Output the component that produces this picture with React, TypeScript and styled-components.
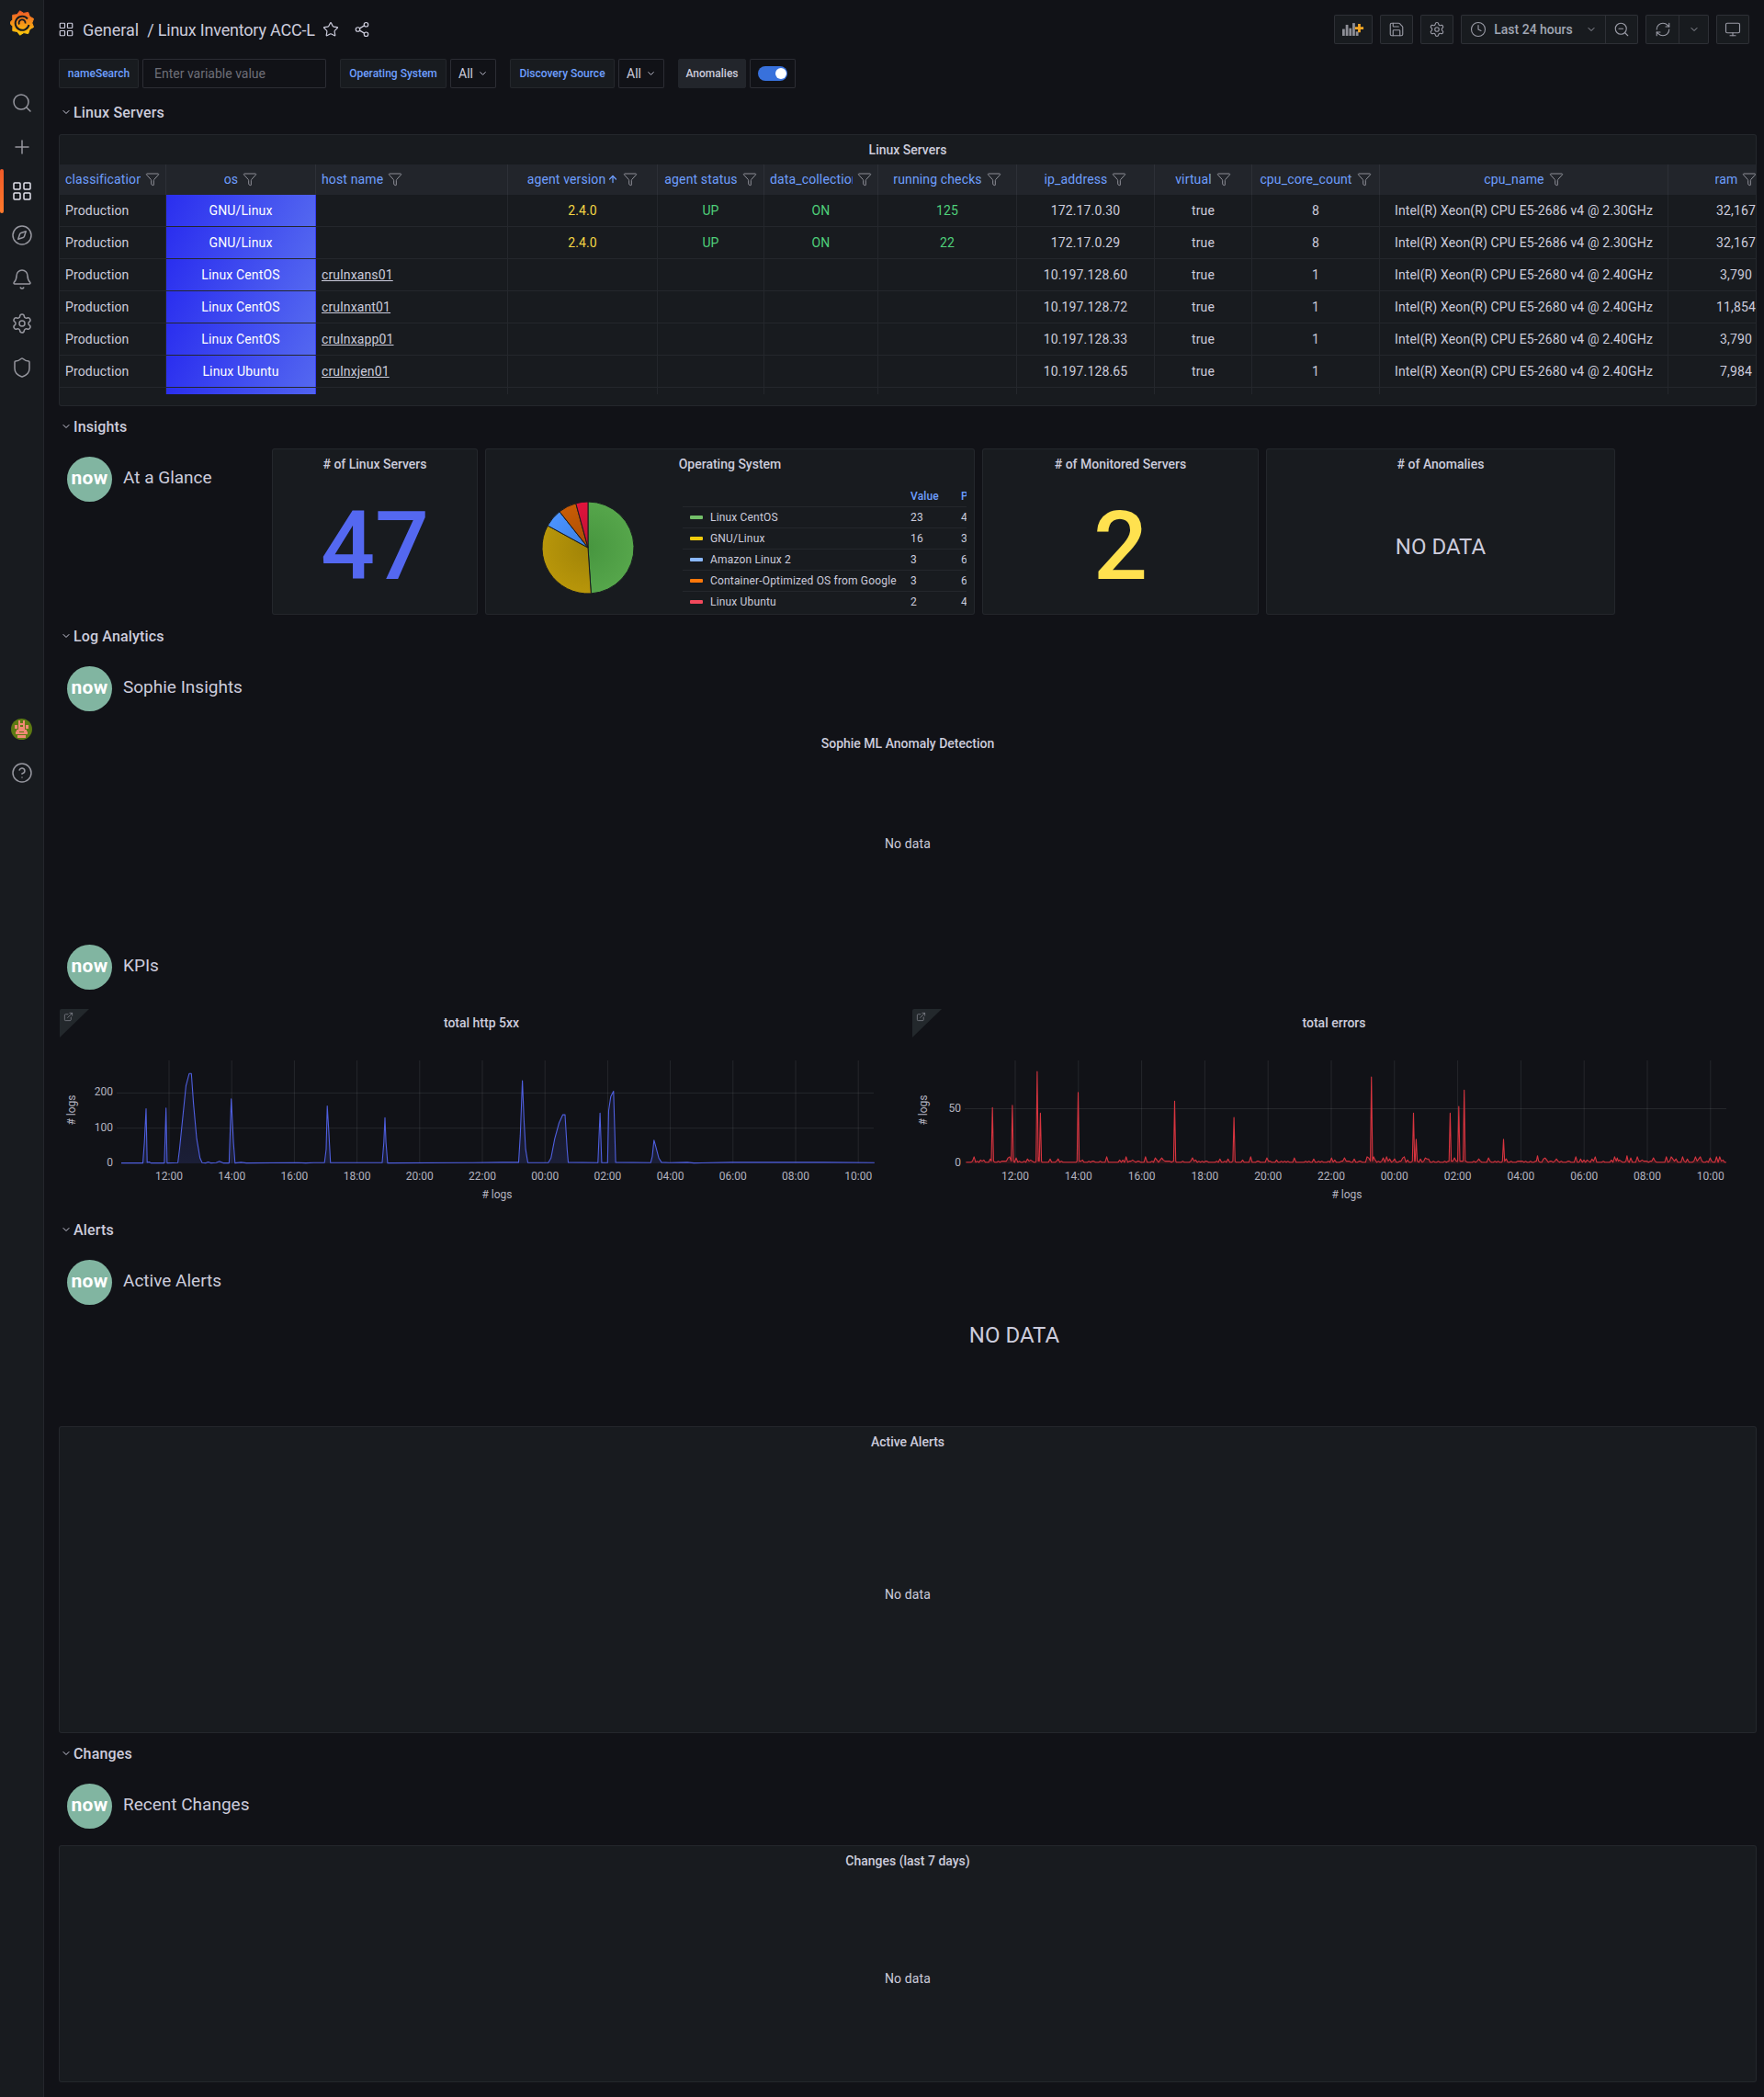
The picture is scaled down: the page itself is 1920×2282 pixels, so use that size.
import styled, { createGlobalStyle } from "styled-components";
import {
  ArrowUp,
  Bell,
  ChevronDown,
  CircleHelp,
  Clock,
  Compass,
  ExternalLink,
  Filter,
  LayoutGrid,
  Monitor,
  Plus,
  RefreshCw,
  Save,
  Search,
  Settings,
  Share2,
  Shield,
  Star,
  ZoomOut,
} from "lucide-react";

const GlobalStyle = createGlobalStyle`
  html, body {
    margin: 0;
    background: #111217;
    color: #ccccdc;
    font-family: Roboto, "Liberation Sans", sans-serif;
    font-size: 14px;
  }
  * { box-sizing: border-box; }
`;

const BORDER = "rgba(204, 204, 220, 0.07)";
const BTN_BORDER = "rgba(204, 204, 220, 0.12)";

const Page = styled.div`
  display: flex;
  width: 1920px;
  height: 2282px;
  overflow: hidden;
`;

/* sidebar */
const Sidebar = styled.nav`
  flex: 0 0 48px;
  background: #181b1f;
  border-right: 1px solid #24262c;
  display: flex;
  flex-direction: column;
`;
const BrandBox = styled.div`
  height: 88px;
  padding-top: 11px;
  display: flex;
  justify-content: center;
  align-items: flex-start;
`;
const NavItem = styled.div<{ $active?: boolean }>`
  position: relative;
  height: 48px;
  display: flex;
  align-items: center;
  justify-content: center;
  color: ${(p) => (p.$active ? "#e4e4ee" : "#96979f")};
  ${(p) =>
    p.$active &&
    `&::before {
      content: "";
      position: absolute;
      left: 0;
      top: 0;
      bottom: 0;
      width: 4px;
      border-radius: 2px;
      background: linear-gradient(180deg, #f05a28, #ff7a2b);
    }`}
`;
const NavSpacer = styled.div`
  height: 345px;
`;
const AvatarClip = styled.div`
  width: 23px;
  height: 23px;
  border-radius: 50%;
  overflow: hidden;
`;

/* main */
const Main = styled.main`
  flex: 1;
  min-width: 0;
  padding: 0 8px 0 16px;
`;
const TopBar = styled.header`
  height: 64px;
  display: flex;
  align-items: center;
  padding-right: 8px;
`;
const Crumbs = styled.div`
  display: flex;
  align-items: center;
  font-size: 18px;
  color: #ccccdc;
`;
const CrumbIcon = styled.span`
  display: flex;
  width: 26px;
  margin-left: -1px;
  margin-right: 1px;
  color: #ccccdc;
`;
const CrumbSep = styled.span`
  margin-left: 9px;
  letter-spacing: -0.2px;
`;
const CrumbTool = styled.span<{ $gap: number }>`
  display: flex;
  margin-left: ${(p) => p.$gap}px;
  color: #ccccdc;
`;
const Tools = styled.div`
  margin-left: auto;
  display: flex;
  align-items: center;
  gap: 8px;
`;
const ToolGroup = styled.div`
  display: flex;
  height: 32px;
  background: #181b1f;
  border: 1px solid ${BTN_BORDER};
  border-radius: 2px;
  color: #9a9ba6;
`;
const ToolBtn = styled.div<{ $w: number; $divided?: boolean }>`
  width: ${(p) => p.$w}px;
  display: flex;
  align-items: center;
  justify-content: center;
  gap: 8px;
  font-weight: 500;
  border-left: ${(p) => (p.$divided ? `1px solid ${BTN_BORDER}` : "none")};
`;
const RangeText = styled.span`
  color: #a0a6b3;
  margin: 0 6px 0 0;
`;

/* variables */
const VarRow = styled.div`
  display: flex;
  height: 32px;
`;
const VarLabel = styled.div<{ $w: number; $strong?: boolean }>`
  width: ${(p) => p.$w}px;
  display: flex;
  align-items: center;
  justify-content: center;
  font-size: 12px;
  font-weight: 500;
  background: ${(p) => (p.$strong ? "#22252b" : "#181b1f")};
  color: ${(p) => (p.$strong ? "#ccccdc" : "#6e9fff")};
  border: 1px solid ${(p) => (p.$strong ? "#22252b" : BORDER)};
  border-radius: 2px;
`;
const VarField = styled.div<{ $w: number; $left: number; $after: number }>`
  width: ${(p) => p.$w}px;
  margin-left: ${(p) => p.$left}px;
  margin-right: ${(p) => p.$after}px;
  display: flex;
  align-items: center;
  padding: 0 8px;
  gap: 5px;
  background: #111217;
  border: 1px solid rgba(204, 204, 220, 0.15);
  border-radius: 2px;
`;
const Placeholder = styled.span`
  color: #6e6f78;
  padding-left: 4px;
`;
const Track = styled.div`
  position: relative;
  width: 32px;
  height: 16px;
  border-radius: 8px;
  background: #3871dc;
  &::after {
    content: "";
    position: absolute;
    right: 1px;
    top: 2px;
    width: 12px;
    height: 12px;
    border-radius: 50%;
    background: #fff;
  }
`;

/* rows */
const RowHead = styled.div<{ $top: number }>`
  height: 32px;
  margin-top: ${(p) => p.$top}px;
  margin-bottom: 8px;
  display: flex;
  align-items: center;
  font-size: 16px;
  font-weight: 500;
  letter-spacing: 0.15px;
  color: #ccccdc;
  svg {
    margin: 0 2px;
  }
`;

const Panel = styled.section<{ $h: number; $bare?: boolean }>`
  height: ${(p) => p.$h}px;
  display: flex;
  flex-direction: column;
  overflow: hidden;
  min-width: 0;
  background: ${(p) => (p.$bare ? "transparent" : "#181b1f")};
  border: 1px solid ${(p) => (p.$bare ? "transparent" : BORDER)};
  border-radius: 3px;
  position: relative;
`;
const PanelTitle = styled.h2`
  flex: 0 0 32px;
  margin: 0;
  display: flex;
  align-items: center;
  justify-content: center;
  font-size: 14px;
  font-weight: 500;
  color: #ccccdc;
`;
const ChartTitle = styled(PanelTitle)`
  flex-basis: 30px;
  margin-bottom: 1px;
`;
const PanelBody = styled.div`
  flex: 1;
  display: flex;
  align-items: center;
  justify-content: center;
  min-height: 0;
`;
const NoDataSmall = styled.span`
  font-size: 14px;
  letter-spacing: 0.14px;
  color: #ccccdc;
`;
const NoDataBig = styled.span`
  font-size: 24px;
  color: #ccccdc;
`;
const StatValue = styled.span<{ $color: string }>`
  font-size: 104px;
  font-weight: 500;
  line-height: 1;
  color: ${(p) => p.$color};
`;

/* table */
const TEMPLATE = "116px 163px 209px 163px 116px 124px 151px 150px 106px 139px 314px 148px";
const TableHead = styled.div`
  display: grid;
  grid-template-columns: ${TEMPLATE};
  height: 33px;
  background: #22252b;
`;
const TableBody = styled.div`
  height: 217px;
  overflow: hidden;
`;
const TableRow = styled.div`
  display: grid;
  grid-template-columns: ${TEMPLATE};
  height: 35px;
  border-bottom: 1px solid ${BORDER};
`;
const HeadCell = styled.div<{ $align: "left" | "center" }>`
  display: flex;
  align-items: center;
  justify-content: ${(p) => (p.$align === "left" ? "flex-start" : "center")};
  gap: 5px;
  padding: 0 6px 2px;
  min-width: 0;
  border-right: 1px solid ${BORDER};
  color: #6e9fff;
  letter-spacing: 0.14px;
  svg {
    flex: none;
    color: #8e8f97;
  }
`;
const HeadText = styled.span`
  white-space: nowrap;
  overflow: hidden;
  display: flex;
  align-items: center;
  svg {
    color: #6e9fff;
    margin-left: 2px;
  }
`;
const Cell = styled.div<{ $align?: string; $color?: string; $fill?: boolean }>`
  display: flex;
  align-items: center;
  justify-content: ${(p) => (p.$align === "center" ? "center" : "flex-start")};
  padding: 0 6px;
  white-space: nowrap;
  overflow: hidden;
  letter-spacing: 0.14px;
  border-right: 1px solid ${BORDER};
  color: ${(p) => (p.$fill ? "#fff" : p.$color || "#ccccdc")};
  background: ${(p) =>
    p.$fill ? "linear-gradient(120deg, #2a2eef, #5468f0)" : "transparent"};
`;
const HostLink = styled.span`
  text-decoration: underline;
`;

/* insights */
const InsightRow = styled.div`
  display: grid;
  grid-template-columns: 224px 224px 533px 301px 380px;
  gap: 8px;
`;
const LogoRow = styled.div<{ $h: number; $top?: number }>`
  height: ${(p) => p.$h}px;
  margin-top: ${(p) => p.$top || 0}px;
  padding: 9px 0 0 9px;
  display: flex;
  align-items: flex-start;
  gap: 12px;
`;
const NowBadge = styled.div`
  width: 49px;
  height: 49px;
  flex: none;
  border-radius: 50%;
  background: #81b5a1;
  display: flex;
  align-items: center;
  justify-content: center;
  color: #fff;
  font-size: 21px;
  font-weight: 700;
  letter-spacing: 0.4px;
  line-height: 1;
  padding-bottom: 3px;
`;
const LogoLabel = styled.span`
  font-size: 19px;
  line-height: 46px;
  color: #ccccdc;
`;
const PieBody = styled.div`
  flex: 1;
  display: flex;
  min-height: 0;
`;
const PieBox = styled.div`
  flex: 0 0 214px;
`;
const Legend = styled.div`
  width: 309px;
  padding-top: 7px;
  overflow: hidden;
  font-size: 12px;
  letter-spacing: 0.17px;
`;
const LegendHead = styled.div`
  display: grid;
  grid-template-columns: 248px 55px 20px;
  height: 23px;
  align-items: center;
  color: #6e9fff;
  font-weight: 500;
`;
const LegendRow = styled.div`
  display: grid;
  grid-template-columns: 248px 55px 20px;
  height: 23px;
  align-items: center;
  border-top: 1px solid ${BORDER};
`;
const LegendName = styled.span`
  display: flex;
  align-items: center;
  gap: 8px;
  padding-left: 8px;
  white-space: nowrap;
`;
const Swatch = styled.i<{ $color: string }>`
  width: 14px;
  height: 4px;
  border-radius: 1px;
  background: ${(p) => p.$color};
`;

/* charts */
const ChartGrid = styled.div`
  display: grid;
  grid-template-columns: 920px 920px;
  gap: 8px;
`;
const Corner = styled.div`
  position: absolute;
  left: 0;
  top: 0;
  width: 32px;
  height: 31px;
  background: #23282c;
  clip-path: polygon(0 0, 100% 0, 0 100%);
  color: #8e8f97;
  svg {
    margin: 3px 0 0 4px;
    display: block;
  }
`;
const AlertTop = styled.div`
  display: grid;
  grid-template-columns: 232px 1fr;
  height: 190px;
`;
const AlertNoData = styled.div`
  height: 182px;
  display: flex;
  align-items: center;
  justify-content: center;
`;

const ROWS = [
  ["GNU/Linux", "", "2.4.0", "UP", "ON", "125", "172.17.0.30", "true", "8", "Intel(R) Xeon(R) CPU E5-2686 v4 @ 2.30GHz", "32,167"],
  ["GNU/Linux", "", "2.4.0", "UP", "ON", "22", "172.17.0.29", "true", "8", "Intel(R) Xeon(R) CPU E5-2686 v4 @ 2.30GHz", "32,167"],
  ["Linux CentOS", "crulnxans01", "", "", "", "", "10.197.128.60", "true", "1", "Intel(R) Xeon(R) CPU E5-2680 v4 @ 2.40GHz", "3,790"],
  ["Linux CentOS", "crulnxant01", "", "", "", "", "10.197.128.72", "true", "1", "Intel(R) Xeon(R) CPU E5-2680 v4 @ 2.40GHz", "11,854"],
  ["Linux CentOS", "crulnxapp01", "", "", "", "", "10.197.128.33", "true", "1", "Intel(R) Xeon(R) CPU E5-2680 v4 @ 2.40GHz", "3,790"],
  ["Linux Ubuntu", "crulnxjen01", "", "", "", "", "10.197.128.65", "true", "1", "Intel(R) Xeon(R) CPU E5-2680 v4 @ 2.40GHz", "7,984"],
  ["", "", "", "", "", "", "", "", "", "", ""],
];

const HEADS: { label: string; align: "left" | "center"; sorted?: boolean }[] = [
  { label: "classification", align: "left" },
  { label: "os", align: "center" },
  { label: "host name", align: "left" },
  { label: "agent version", align: "center", sorted: true },
  { label: "agent status", align: "center" },
  { label: "data_collection", align: "center" },
  { label: "running checks", align: "center" },
  { label: "ip_address", align: "center" },
  { label: "virtual", align: "center" },
  { label: "cpu_core_count", align: "center" },
  { label: "cpu_name", align: "center" },
  { label: "ram", align: "center" },
];

const cellColor = (i: number) => {
  if (i === 2) return "#f2d544";
  if (i >= 3 && i <= 5) return "#4fd07a";
  return undefined;
};

const LEGEND = [
  { name: "Linux CentOS", value: 23, pct: "4", color: "#73bf69", pie: "#56a64b", core: "#47963f" },
  { name: "GNU/Linux", value: 16, pct: "3", color: "#f2cc0c", pie: "#b8960a", core: "#a08307" },
  { name: "Amazon Linux 2", value: 3, pct: "6", color: "#8ab8ff", pie: "#4b93ff", core: "#3b7fe0" },
  { name: "Container-Optimized OS from Google", value: 3, pct: "6", color: "#ff780a", pie: "#c85c05", core: "#a94d05" },
  { name: "Linux Ubuntu", value: 2, pct: "4", color: "#f2495c", pie: "#e0143c", core: "#c01034" },
];

const Pie = () => {
  const total = LEGEND.reduce((s, l) => s + l.value, 0);
  const cx = 111;
  const cy = 75;
  const r = 50;
  let start = 0;
  const slices = LEGEND.map((l, i) => {
    const end = start + (l.value / total) * Math.PI * 2;
    const x0 = cx + r * Math.sin(start);
    const y0 = cy - r * Math.cos(start);
    const x1 = cx + r * Math.sin(end);
    const y1 = cy - r * Math.cos(end);
    const large = end - start > Math.PI ? 1 : 0;
    start = end;
    return (
      <path
        key={l.name}
        d={`M${cx} ${cy}L${x0} ${y0}A${r} ${r} 0 ${large} 1 ${x1} ${y1}Z`}
        fill={`url(#pie${i})`}
        stroke="#181b1f"
        strokeWidth="1"
      />
    );
  });
  return (
    <svg width="214" height="149">
      <defs>
        {LEGEND.map((l, i) => (
          <radialGradient key={l.name} id={`pie${i}`} gradientUnits="userSpaceOnUse" cx={cx} cy={cy} r={r}>
            <stop offset="0" stopColor={l.core} />
            <stop offset="1" stopColor={l.pie} />
          </radialGradient>
        ))}
      </defs>
      {slices}
    </svg>
  );
};

const HTTP_POINTS: [number, number][] = [
  [138, 1], [178, 1], [181, 60], [184, 155], [186, 3], [190, 4], [193, 1], [218, 1], [221, 157], [223, 1],
  [243, 2], [246, 40], [252, 130], [258, 220], [264, 255], [268, 255], [272, 170], [278, 70], [284, 15], [288, 2],
  [295, 1], [299, 4], [304, 1], [314, 2], [320, 6], [327, 1], [338, 1], [342, 183], [346, 60], [349, 1], [360, 3], [370, 1],
  [465, 2], [480, 1], [495, 2], [515, 2], [518, 40], [520, 163], [523, 90], [526, 2], [622, 2], [625, 60], [627, 130],
  [629, 60], [632, 1], [790, 2], [845, 3], [875, 3], [878, 80], [882, 235], [885, 120], [888, 40], [892, 2], [930, 2],
  [935, 15], [942, 70], [950, 115], [957, 138], [961, 138], [965, 40], [967, 3], [1022, 2], [1026, 143], [1029, 2],
  [1040, 2], [1042, 150], [1046, 190], [1051, 205], [1053, 100], [1055, 3], [1120, 2], [1123, 20], [1126, 66],
  [1130, 45], [1135, 15], [1140, 3], [1155, 2], [1188, 3], [1200, 1], [1270, 3], [1322, 3], [1440, 3], [1535, 2],
];

const ERROR_PEAKS: [number, number][] = [
  [169, 51], [206, 53], [252, 84], [258, 46], [328, 65], [507, 57], [617, 42], [872, 79], [950, 46], [955, 22],
  [1018, 46], [1034, 52], [1044, 67], [1117, 22], [1180, 7], [1346, 7], [1328, 5],
];

const errorPoints = () => {
  const pts: [number, number][] = [];
  let seed = 17;
  for (let x = 120; x < 1532; x += 3) {
    seed = (seed * 137 + 71) % 1009;
    const bump = seed % 5 === 0 ? 3 + (seed % 4) : seed % 3 === 0 ? 2 : 1;
    const peak = ERROR_PEAKS.find((p) => Math.abs(p[0] - x) < 3);
    if (peak) {
      pts.push([peak[0] - 2, 2], [peak[0], peak[1]], [peak[0] + 2, 2]);
    } else {
      pts.push([x, bump]);
    }
  }
  return pts;
};

type ChartProps = {
  points: [number, number][];
  xOffset: number;
  yScale: number;
  color: string;
  gradientId: string;
  plotLeft: number;
  firstTick: number;
  tickStep: number;
  yTicks: number[];
  xLabelAt: number;
  yLabelAt: number;
};

const TICKS = ["12:00", "14:00", "16:00", "18:00", "20:00", "22:00", "00:00", "02:00", "04:00", "06:00", "08:00", "10:00"];

const TimeChart = ({ points, xOffset, yScale, color, gradientId, plotLeft, firstTick, tickStep, yTicks, xLabelAt, yLabelAt }: ChartProps) => {
  const base = 137;
  const plotRight = 886;
  const coords = points
    .map(([x, v]) => [Math.max(plotLeft, x / 1.704 + xOffset), base - v * yScale])
    .sort((a, b) => a[0] - b[0]);
  const line = coords.map((c) => `${c[0].toFixed(1)},${c[1].toFixed(1)}`).join(" ");
  const area = `M${coords[0][0]} ${base}L${line.replace(/ /g, "L")}L${coords[coords.length - 1][0]} ${base}Z`;
  return (
    <svg width="918" height="183" fontFamily="Roboto, sans-serif" fontSize="12" fill="#b4b4c0">
      <defs>
        <linearGradient id={gradientId} x1="0" y1="0" x2="0" y2="1">
          <stop offset="0" stopColor={color} stopOpacity="0.04" />
          <stop offset="1" stopColor={color} stopOpacity="0.16" />
        </linearGradient>
      </defs>
      {TICKS.map((t, i) => (
        <line key={t} x1={firstTick + i * tickStep} x2={firstTick + i * tickStep} y1="25" y2="137" stroke="rgba(240,250,255,0.09)" />
      ))}
      {yTicks.map((v) => (
        <line key={v} x1={plotLeft} x2={plotRight} y1={base - v * yScale} y2={base - v * yScale} stroke="rgba(240,250,255,0.09)" />
      ))}
      <path d={area} fill={`url(#${gradientId})`} />
      <polyline points={line} fill="none" stroke={color} strokeWidth="1.1" strokeLinejoin="round" />
      {yTicks.concat(0).map((v) => (
        <text key={v} x={plotLeft - 4} y={base - v * yScale + 3} textAnchor="end">{v}</text>
      ))}
      {TICKS.map((t, i) => (
        <text key={t} x={firstTick + i * tickStep} y="155" textAnchor="middle">{t}</text>
      ))}
      <text x={xLabelAt} y="175" textAnchor="middle">{"# logs"}</text>
      <text transform={`translate(${yLabelAt} 79) rotate(-90)`} textAnchor="middle">{"# logs"}</text>
    </svg>
  );
};

const GrafanaLogo = () => {
  const teeth = 9;
  const pts: string[] = [];
  for (let i = 0; i < teeth * 2; i++) {
    const a = (i / (teeth * 2)) * Math.PI * 2 - 1.05;
    const r = i % 2 === 0 ? 13.4 : 10.8;
    pts.push(`${(13 + r * Math.cos(a)).toFixed(1)},${(14 + r * Math.sin(a)).toFixed(1)}`);
  }
  return (
    <svg width="26" height="28" viewBox="0 0 26 28">
      <defs>
        <linearGradient id="brand" x1="0" y1="0" x2="0" y2="1">
          <stop offset="0" stopColor="#f05a28" />
          <stop offset="1" stopColor="#fbca0a" />
        </linearGradient>
      </defs>
      <polygon points={pts.join(" ")} fill="url(#brand)" strokeLinejoin="round" stroke="url(#brand)" strokeWidth="1" />
      <path d="M19 9.5A7.5 7.5 0 1 0 20.500 16" fill="none" stroke="#181b1f" strokeWidth="2" />
      <path d="M10 15.500A3.500 3.500 0 1 1 16.500 14.500" fill="none" stroke="#181b1f" strokeWidth="1.8" />
    </svg>
  );
};

const PINK = [
  [8, 2, 2, 7], [13, 2, 2, 7], [8, 5, 7, 2], [4, 7, 3, 4], [16, 7, 3, 4], [8, 9, 7, 4], [6, 12, 11, 2],
  [5, 14, 4, 3], [14, 14, 4, 3], [9, 15, 5, 2], [7, 18, 9, 3],
];

const Avatar = () => (
  <AvatarClip>
    <svg width="23" height="23">
      <rect width="23" height="23" fill="#5d7a12" />
      {PINK.map((r) => (
        <rect key={r.join()} x={r[0]} y={r[1]} width={r[2]} height={r[3]} fill="#f08a76" />
      ))}
    </svg>
  </AvatarClip>
);

const AddPanelIcon = () => (
  <svg width="24" height="17" viewBox="0 0 26 18">
    <g fill="#8e8f97">
      <rect x="0" y="8" width="3" height="8" />
      <rect x="4" y="3" width="3" height="13" />
      <rect x="8" y="7" width="3" height="9" />
      <rect x="12" y="1" width="3" height="15" />
      <rect x="16" y="11" width="3" height="5" />
    </g>
    <path d="M15 5.500h3.500V2h3v3.500H25v3h-3.500V12h-3V8.500H15z" fill="#f5a623" />
  </svg>
);

const NowLogo = ({ label, h, top }: { label: string; h: number; top?: number }) => (
  <LogoRow $h={h} $top={top}>
    <NowBadge>now</NowBadge>
    <LogoLabel>{label}</LogoLabel>
  </LogoRow>
);

const SectionHead = ({ title, top }: { title: string; top: number }) => (
  <RowHead $top={top}>
    <ChevronDown size={12} strokeWidth={2} />
    {title}
  </RowHead>
);

const ICON = { size: 24, strokeWidth: 1.5 };
const SMALL = { size: 18, strokeWidth: 1.5 };

const App = () => {
  return (
    <Page>
      <GlobalStyle />
      <Sidebar>
        <BrandBox>
          <GrafanaLogo />
        </BrandBox>
        <NavItem><Search {...ICON} /></NavItem>
        <NavItem><Plus {...ICON} /></NavItem>
        <NavItem $active><LayoutGrid {...ICON} /></NavItem>
        <NavItem><Compass {...ICON} /></NavItem>
        <NavItem><Bell {...ICON} /></NavItem>
        <NavItem><Settings {...ICON} /></NavItem>
        <NavItem><Shield {...ICON} /></NavItem>
        <NavSpacer />
        <NavItem><Avatar /></NavItem>
        <NavItem><CircleHelp {...ICON} /></NavItem>
      </Sidebar>
      <Main>
        <TopBar>
          <Crumbs>
            <CrumbIcon><LayoutGrid size={18} strokeWidth={1.6} /></CrumbIcon>
            General
            <CrumbSep>/ Linux Inventory ACC-L</CrumbSep>
            <CrumbTool $gap={8}><Star size={18} strokeWidth={1.6} /></CrumbTool>
            <CrumbTool $gap={16}><Share2 size={18} strokeWidth={1.6} /></CrumbTool>
          </Crumbs>
          <Tools>
            <ToolGroup><ToolBtn $w={40}><AddPanelIcon /></ToolBtn></ToolGroup>
            <ToolGroup><ToolBtn $w={34}><Save {...SMALL} /></ToolBtn></ToolGroup>
            <ToolGroup><ToolBtn $w={34}><Settings {...SMALL} /></ToolBtn></ToolGroup>
            <ToolGroup>
              <ToolBtn $w={156}>
                <Clock {...SMALL} />
                <RangeText>Last 24 hours</RangeText>
                <ChevronDown size={12} />
              </ToolBtn>
              <ToolBtn $w={35} $divided><ZoomOut {...SMALL} /></ToolBtn>
            </ToolGroup>
            <ToolGroup>
              <ToolBtn $w={35}><RefreshCw {...SMALL} /></ToolBtn>
              <ToolBtn $w={32} $divided><ChevronDown size={12} /></ToolBtn>
            </ToolGroup>
            <ToolGroup><ToolBtn $w={34}><Monitor {...SMALL} /></ToolBtn></ToolGroup>
          </Tools>
        </TopBar>

        <VarRow>
          <VarLabel $w={87}>nameSearch</VarLabel>
          <VarField $w={200} $left={4} $after={15}><Placeholder>Enter variable value</Placeholder></VarField>
          <VarLabel $w={116}>Operating System</VarLabel>
          <VarField $w={50} $left={4} $after={15}>All <ChevronDown size={12} /></VarField>
          <VarLabel $w={114}>Discovery Source</VarLabel>
          <VarField $w={50} $left={4} $after={15}>All <ChevronDown size={12} /></VarField>
          <VarLabel $w={74} $strong>Anomalies</VarLabel>
          <VarField $w={50} $left={4} $after={0}><Track /></VarField>
        </VarRow>

        <SectionHead title="Linux Servers" top={10} />
        <Panel $h={296}>
          <PanelTitle>Linux Servers</PanelTitle>
          <TableHead>
            {HEADS.map((h) => (
              <HeadCell key={h.label} $align={h.align}>
                <HeadText>
                  {h.label}
                  {h.sorted && <ArrowUp size={12} strokeWidth={2.5} />}
                </HeadText>
                <Filter size={16} strokeWidth={1.5} />
              </HeadCell>
            ))}
          </TableHead>
          <TableBody>
            {ROWS.map((r, idx) => (
              <TableRow key={idx}>
                <Cell>{r[0] ? "Production" : ""}</Cell>
                <Cell $align="center" $fill>{r[0]}</Cell>
                <Cell>{r[1] && <HostLink>{r[1]}</HostLink>}</Cell>
                {r.slice(2).map((c, i) => (
                  <Cell key={i} $align="center" $color={cellColor(i + 2)}>{c}</Cell>
                ))}
              </TableRow>
            ))}
          </TableBody>
        </Panel>

        <SectionHead title="Insights" top={6} />
        <InsightRow>
          <NowLogo label="At a Glance" h={181} />
          <Panel $h={181}>
            <PanelTitle># of Linux Servers</PanelTitle>
            <PanelBody><StatValue $color="#5468f0">47</StatValue></PanelBody>
          </Panel>
          <Panel $h={181}>
            <PanelTitle>Operating System</PanelTitle>
            <PieBody>
              <PieBox><Pie /></PieBox>
              <Legend>
                <LegendHead>
                  <span />
                  <span>Value</span>
                  <span>P</span>
                </LegendHead>
                {LEGEND.map((l) => (
                  <LegendRow key={l.name}>
                    <LegendName><Swatch $color={l.color} />{l.name}</LegendName>
                    <span>{l.value}</span>
                    <span>{l.pct}</span>
                  </LegendRow>
                ))}
              </Legend>
            </PieBody>
          </Panel>
          <Panel $h={181}>
            <PanelTitle># of Monitored Servers</PanelTitle>
            <PanelBody><StatValue $color="#ffe14f">2</StatValue></PanelBody>
          </Panel>
          <Panel $h={181}>
            <PanelTitle># of Anomalies</PanelTitle>
            <PanelBody><NoDataBig>NO DATA</NoDataBig></PanelBody>
          </Panel>
        </InsightRow>

        <SectionHead title="Log Analytics" top={7} />
        <NowLogo label="Sophie Insights" h={76} />
        <Panel $h={220} $bare>
          <PanelTitle>Sophie ML Anomaly Detection</PanelTitle>
          <PanelBody><NoDataSmall>No data</NoDataSmall></PanelBody>
        </Panel>
        <NowLogo label="KPIs" h={78} top={7} />
        <ChartGrid>
          <Panel $h={217} $bare>
            <Corner><ExternalLink size={11} strokeWidth={1.5} /></Corner>
            <ChartTitle>total http 5xx</ChartTitle>
            <TimeChart
              points={HTTP_POINTS}
              xOffset={-14}
              yScale={0.383}
              color="#4f5fe0"
              gradientId="httpFill"
              plotLeft={62}
              firstTick={119}
              tickStep={68.2}
              yTicks={[100, 200]}
              xLabelAt={476}
              yLabelAt={17}
            />
          </Panel>
          <Panel $h={217} $bare>
            <Corner><ExternalLink size={11} strokeWidth={1.5} /></Corner>
            <ChartTitle>total errors</ChartTitle>
            <TimeChart
              points={errorPoints()}
              xOffset={-12}
              yScale={1.19}
              color="#d8343f"
              gradientId="errFill"
              plotLeft={57}
              firstTick={112}
              tickStep={68.8}
              yTicks={[50]}
              xLabelAt={473}
              yLabelAt={16}
            />
          </Panel>
        </ChartGrid>

        <SectionHead title="Alerts" top={8} />
        <AlertTop>
          <NowLogo label="Active Alerts" h={182} />
          <AlertNoData><NoDataBig>NO DATA</NoDataBig></AlertNoData>
        </AlertTop>
        <Panel $h={334}>
          <PanelTitle>Active Alerts</PanelTitle>
          <PanelBody><NoDataSmall>No data</NoDataSmall></PanelBody>
        </Panel>

        <SectionHead title="Changes" top={6} />
        <NowLogo label="Recent Changes" h={76} />
        <Panel $h={258}>
          <PanelTitle>Changes (last 7 days)</PanelTitle>
          <PanelBody><NoDataSmall>No data</NoDataSmall></PanelBody>
        </Panel>
      </Main>
    </Page>
  );
};

export default App;
